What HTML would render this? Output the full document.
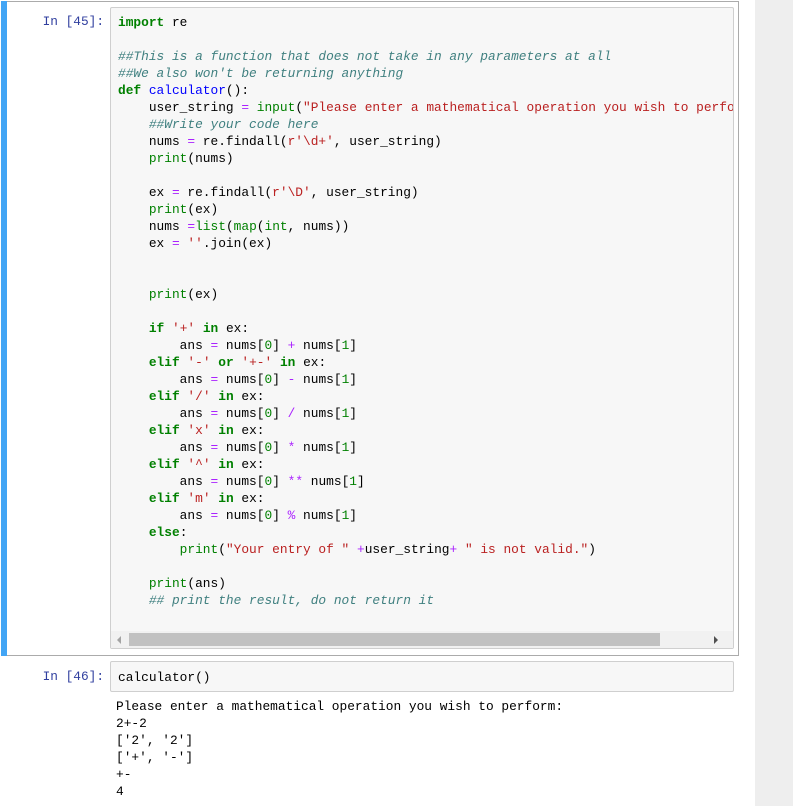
<!DOCTYPE html>
<html><head><style>
body{margin:0;width:793px;height:806px;background:#fff;position:relative;overflow:hidden;font-family:"Liberation Mono",monospace;}
.gray{position:absolute;left:755px;top:0;width:38px;height:806px;background:#eeeeee;}
.cell{position:absolute;left:1px;top:1px;width:737px;height:653px;border:1px solid #ababab;border-left:none;}
.bar{position:absolute;left:1px;top:1px;width:6px;height:655px;background:#42a5f5;}
.prompt{position:absolute;color:#303f9f;font-size:12.8px;text-align:right;width:100px;left:4px;}
.inbox{position:absolute;left:110px;width:622px;background:#f7f7f7;border:1px solid #cfcfcf;border-radius:2px;}
pre{margin:0;font-family:"Liberation Mono",monospace;font-size:12.85px;line-height:17px;color:#000;white-space:pre;overflow:hidden;}
.k{color:#008000;font-weight:bold}.c{color:#408080;font-style:italic}.s{color:#ba2121}.o{color:#aa22ff}.b{color:#008000}.f{color:#0000ff}.n{color:#008000}
.sb{position:absolute;left:0;top:623px;width:622px;height:17px;background:#f1f1f1;}
.thumb{position:absolute;left:18px;top:2px;width:531px;height:13px;background:#c1c1c1;}
</style></head><body>
<div class="gray"></div>
<div class="cell"></div>
<div class="bar"></div>
<div class="prompt" style="top:14px">In [45]:</div>
<div class="inbox" style="top:7px;height:640px;">
<pre style="position:absolute;left:7px;top:6px;width:615px;"><span class="k">import</span> re

<span class="c">##This is a function that does not take in any parameters at all</span>
<span class="c">##We also won't be returning anything</span>
<span class="k">def</span> <span class="f">calculator</span>():
    user_string <span class="o">=</span> <span class="b">input</span>(<span class="s">"Please enter a mathematical operation you wish to perform: "</span>)
    <span class="c">##Write your code here</span>
    nums <span class="o">=</span> re.findall(<span class="s">r'\d+'</span>, user_string)
    <span class="b">print</span>(nums)

    ex <span class="o">=</span> re.findall(<span class="s">r'\D'</span>, user_string)
    <span class="b">print</span>(ex)
    nums <span class="o">=</span><span class="b">list</span>(<span class="b">map</span>(<span class="b">int</span>, nums))
    ex <span class="o">=</span> <span class="s">''</span>.join(ex)


    <span class="b">print</span>(ex)

    <span class="k">if</span> <span class="s">'+'</span> <span class="k">in</span> ex:
        ans <span class="o">=</span> nums[<span class="n">0</span>] <span class="o">+</span> nums[<span class="n">1</span>]
    <span class="k">elif</span> <span class="s">'-'</span> <span class="k">or</span> <span class="s">'+-'</span> <span class="k">in</span> ex:
        ans <span class="o">=</span> nums[<span class="n">0</span>] <span class="o">-</span> nums[<span class="n">1</span>]
    <span class="k">elif</span> <span class="s">'/'</span> <span class="k">in</span> ex:
        ans <span class="o">=</span> nums[<span class="n">0</span>] <span class="o">/</span> nums[<span class="n">1</span>]
    <span class="k">elif</span> <span class="s">'x'</span> <span class="k">in</span> ex:
        ans <span class="o">=</span> nums[<span class="n">0</span>] <span class="o">*</span> nums[<span class="n">1</span>]
    <span class="k">elif</span> <span class="s">'^'</span> <span class="k">in</span> ex:
        ans <span class="o">=</span> nums[<span class="n">0</span>] <span class="o">**</span> nums[<span class="n">1</span>]
    <span class="k">elif</span> <span class="s">'m'</span> <span class="k">in</span> ex:
        ans <span class="o">=</span> nums[<span class="n">0</span>] <span class="o">%</span> nums[<span class="n">1</span>]
    <span class="k">else</span>:
        <span class="b">print</span>(<span class="s">"Your entry of "</span> <span class="o">+</span>user_string<span class="o">+</span> <span class="s">" is not valid."</span>)

    <span class="b">print</span>(ans)
    <span class="c">## print the result, do not return it</span></pre>
<div class="sb"><div class="thumb"></div>
<div style="position:absolute;left:6px;top:5px;width:0;height:0;border-top:4px solid transparent;border-bottom:4px solid transparent;border-right:4px solid #a3a3a3;"></div>
<div style="position:absolute;left:603px;top:5px;width:0;height:0;border-top:4px solid transparent;border-bottom:4px solid transparent;border-left:4px solid #505050;"></div>
</div>
</div>
<div class="prompt" style="top:669px">In [46]:</div>
<div class="inbox" style="top:661px;height:29px;">
<pre style="position:absolute;left:7px;top:7px;">calculator()</pre>
</div>
<pre style="position:absolute;left:116px;top:698px;">Please enter a mathematical operation you wish to perform:
2+-2
['2', '2']
['+', '-']
+-
4</pre>
</body></html>
